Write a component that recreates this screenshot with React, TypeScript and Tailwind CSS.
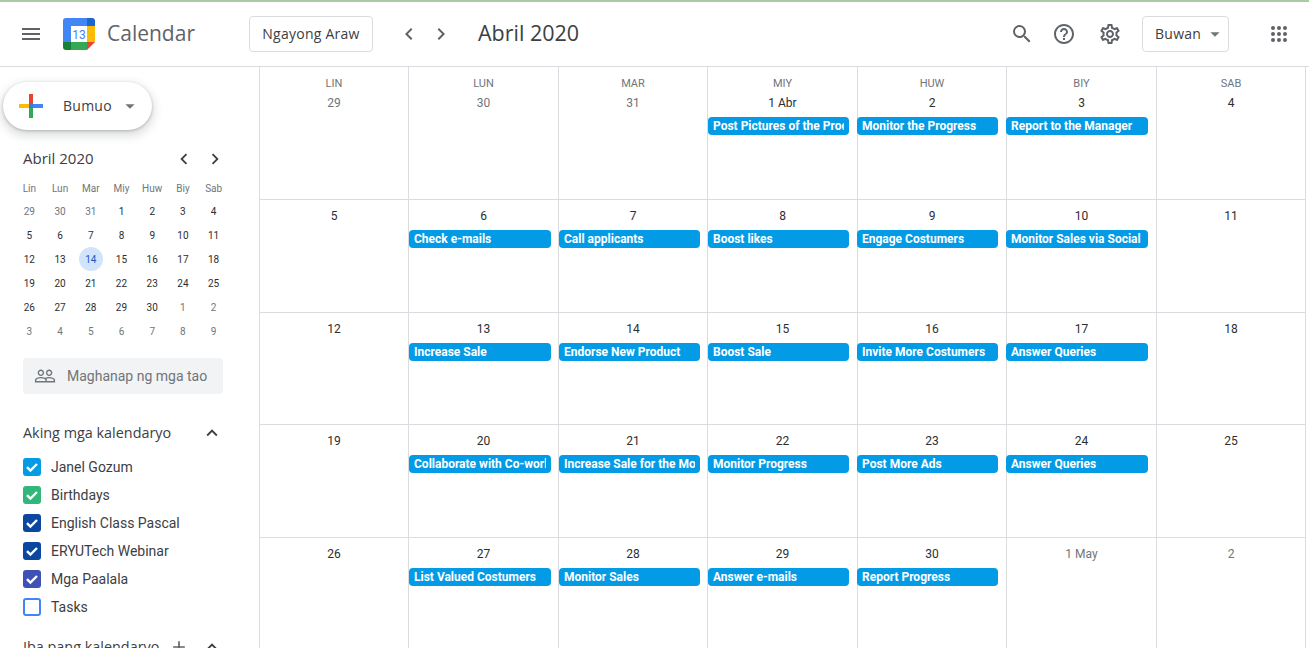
import React from "react";
import {
  MdMenu, MdSearch, MdHelpOutline, MdOutlineSettings, MdChevronLeft, MdChevronRight,
  MdExpandLess, MdPeopleOutline, MdAdd, MdArrowDropDown,
} from "react-icons/md";

const HEAD = '"Open Sans", Roboto, sans-serif';

function Logo() {
  return (
    <svg width="32" height="32" viewBox="0 0 32 32" className="shrink-0">
      <path d="M24 0H3a3 3 0 0 0-3 3v21h8V8h16z" fill="#4285f4" />
      <path d="M24 0h5a3 3 0 0 1 3 3v5h-8z" fill="#1967d2" />
      <rect x="24" y="8" width="8" height="16" fill="#fbbc04" />
      <rect x="8" y="24" width="16" height="8" fill="#34a853" />
      <path d="M0 24h8v8H3a3 3 0 0 1-3-3z" fill="#188038" />
      <path d="M24 24h8l-8 8z" fill="#ea4335" />
      <rect x="8" y="8" width="16" height="16" fill="#fff" />
      <text x="16" y="21" textAnchor="middle" fontSize="12" fontFamily="Roboto, sans-serif" fill="#4285f4">13</text>
    </svg>
  );
}

function Plus() {
  return (
    <svg width="24" height="24" viewBox="0 0 24 24" className="shrink-0">
      <rect x="10" y="0" width="4" height="10" fill="#ea4335" />
      <rect x="14" y="10" width="10" height="4" fill="#4285f4" />
      <rect x="10" y="14" width="4" height="10" fill="#34a853" />
      <rect x="0" y="10" width="10" height="4" fill="#fbbc04" />
      <rect x="10" y="10" width="4" height="4" fill="#3c78d8" />
    </svg>
  );
}

function AppsDots() {
  const pos = [2, 8, 14];
  return (
    <svg width="16" height="16" viewBox="0 0 16 16" className="text-[#5f6368]">
      {pos.map((y) => pos.map((x) => <circle key={`${x}-${y}`} cx={x} cy={y} r="2" fill="currentColor" />))}
    </svg>
  );
}

function Check() {
  return (
    <svg width="14" height="14" viewBox="0 0 14 14">
      <path d="M2 7.2 5.4 10.6 12 4" fill="none" stroke="#fff" strokeWidth="2.4" />
    </svg>
  );
}

const mini = [
  [29, 30, 31, 1, 2, 3, 4],
  [5, 6, 7, 8, 9, 10, 11],
  [12, 13, 14, 15, 16, 17, 18],
  [19, 20, 21, 22, 23, 24, 25],
  [26, 27, 28, 29, 30, 1, 2],
  [3, 4, 5, 6, 7, 8, 9],
];

const calendars = [
  { name: "Janel Gozum", color: "#039be5", on: true },
  { name: "Birthdays", color: "#33b679", on: true },
  { name: "English Class Pascal", color: "#0b47a1", on: true },
  { name: "ERYUTech Webinar", color: "#0b47a1", on: true },
  { name: "Mga Paalala", color: "#3f51b5", on: true },
  { name: "Tasks", color: "#4285f4", on: false },
];

type Cell = { d: string; e?: string; muted?: boolean };
const weeks: { h: string; cells: Cell[] }[] = [
  {
    h: "h-[133px]",
    cells: [
      { d: "29", muted: true }, { d: "30", muted: true }, { d: "31", muted: true },
      { d: "1 Abr", e: "Post Pictures of the Product" }, { d: "2", e: "Monitor the Progress" },
      { d: "3", e: "Report to the Manager" }, { d: "4" },
    ],
  },
  {
    h: "h-[113px]",
    cells: [
      { d: "5" }, { d: "6", e: "Check e-mails" }, { d: "7", e: "Call applicants" }, { d: "8", e: "Boost likes" },
      { d: "9", e: "Engage Costumers" }, { d: "10", e: "Monitor Sales via Social Media" }, { d: "11" },
    ],
  },
  {
    h: "h-[112px]",
    cells: [
      { d: "12" }, { d: "13", e: "Increase Sale" }, { d: "14", e: "Endorse New Product" }, { d: "15", e: "Boost Sale" },
      { d: "16", e: "Invite More Costumers" }, { d: "17", e: "Answer Queries" }, { d: "18" },
    ],
  },
  {
    h: "h-[113px]",
    cells: [
      { d: "19" }, { d: "20", e: "Collaborate with Co-workers" }, { d: "21", e: "Increase Sale for the Month" },
      { d: "22", e: "Monitor Progress" }, { d: "23", e: "Post More Ads" }, { d: "24", e: "Answer Queries" }, { d: "25" },
    ],
  },
  {
    h: "h-[111px]",
    cells: [
      { d: "26" }, { d: "27", e: "List Valued Costumers" }, { d: "28", e: "Monitor Sales" }, { d: "29", e: "Answer e-mails" },
      { d: "30", e: "Report Progress" }, { d: "1 May", muted: true }, { d: "2", muted: true },
    ],
  },
];
const heads = ["LIN", "LUN", "MAR", "MIY", "HUW", "BIY", "SAB"];
const barClass = ["", "w-[142px]", "w-[141px]", "w-[141px]", "w-[141px] -ml-px", "w-[142px] -ml-px", ""];

function DayCell({ cell, head, col }: { cell: Cell; head?: string; col: number }) {
  return (
    <div className="border-l border-[#dadce0] min-w-0 flex flex-col">
      {head && (
        <div className="h-[15px] mt-[9px] mb-[3px] text-center text-[11px] leading-[15px] text-[#70757a]">{head}</div>
      )}
      <div className={`${head ? "pt-px" : "mt-[8px]"} h-[17px] leading-[17px] text-center text-[12px] ${head ? "box-content" : ""} ${cell.muted ? "text-[#70757a]" : "text-[#2b2e31]"}`}>
        {cell.d}
      </div>
      {cell.e && (
        <div className={`mt-[5px] h-[18px] rounded-[4px] bg-[#039be5] pl-[5px] pr-[5px] ${barClass[col]}`}>
          <div className="overflow-hidden whitespace-nowrap h-[18px] leading-[19px] text-[12px] font-bold text-white">{cell.e}</div>
        </div>
      )}
    </div>
  );
}

export default function App() {
  return (
    <div className="w-[1309px] h-[648px] overflow-hidden bg-white flex flex-col text-[#3c4043]" style={{ fontFamily: "Roboto, sans-serif" }}>
      <div className="h-[2px] bg-[#a9cba4] shrink-0" />
      <header className="h-[65px] shrink-0 border-b border-[#dadce0] flex items-center">
        <MdMenu size={24} className="ml-[19px] text-[#5f6368] shrink-0" />
        <div className="ml-[20px]"><Logo /></div>
        <span className="ml-[12px] w-[142px] pb-[2px] text-[21px] text-[#5f6368] leading-[28px]" style={{ fontFamily: HEAD }}>Calendar</span>
        <button className="w-[124px] h-[36px] pb-[2px] border border-[#dadce0] rounded-[4px] text-[14px] font-medium text-[#3c4043] tracking-[0.25px]" style={{ fontFamily: HEAD }}>Ngayong Araw</button>
        <MdChevronLeft size={24} className="ml-[24px] text-[#5f6368]" />
        <MdChevronRight size={24} className="ml-[8px] text-[#5f6368]" />
        <span className="ml-[25px] pb-[2px] text-[21.5px] leading-[28px] text-[#3c4043]" style={{ fontFamily: HEAD }}>Abril 2020</span>
        <div className="ml-auto flex items-center">
          <MdSearch size={24} className="text-[#5f6368]" />
          <MdHelpOutline size={24} className="ml-[18px] text-[#5f6368]" />
          <MdOutlineSettings size={24} className="ml-[22px] text-[#5f6368]" />
          <div className="ml-[20px] w-[87px] h-[36px] border border-[#dadce0] rounded-[4px] flex items-center pl-[12px]">
            <span className="pb-[2px] text-[14px] font-medium tracking-[0.25px] text-[#3c4043]" style={{ fontFamily: HEAD }}>Buwan</span>
            <MdArrowDropDown size={22} className="ml-[3px] text-[#70757a]" />
          </div>
          <span className="ml-[42px] mr-[22px]"><AppsDots /></span>
        </div>
      </header>

      <div className="flex flex-1 min-h-0">
        <aside className="w-[259px] shrink-0 overflow-hidden">
          <button className="ml-[3px] mt-[15px] w-[149px] h-[48px] rounded-full bg-white flex items-center shadow-[0_1px_3px_rgba(60,64,67,0.3),0_4px_8px_3px_rgba(60,64,67,0.15)]">
            <span className="ml-[16px]"><Plus /></span>
            <span className="ml-[20px] pb-[2px] text-[14px] font-medium tracking-[0.25px] text-[#3c4043]" style={{ fontFamily: HEAD }}>Bumuo</span>
            <MdArrowDropDown size={22} className="ml-[7px] text-[#70757a]" />
          </button>

          <div className="mt-[19px] ml-[23px] w-[203px] flex items-center h-[20px]">
            <span className="pb-[2px] text-[15px] font-medium text-[#3c4043]" style={{ fontFamily: HEAD }}>Abril 2020</span>
            <MdChevronLeft size={22} className="ml-auto text-[#3c4043]" />
            <MdChevronRight size={22} className="ml-[9px] text-[#3c4043]" />
          </div>

          <div className="ml-[14px] mt-[10px] w-[215px] grid grid-cols-7 text-[10px] text-center">
            {["Lin", "Lun", "Mar", "Miy", "Huw", "Biy", "Sab"].map((h) => (
              <div key={h} className="h-[20px] leading-[20px] text-[#70757a]">{h}</div>
            ))}
            {mini.map((row, r) =>
              row.map((d, c) => {
                const muted = (r === 0 && c < 3) || (r === 4 && c > 4) || r === 5;
                const today = r === 2 && c === 2;
                return (
                  <div key={`${r}-${c}`} className="h-[24px] flex items-center justify-center">
                    <span className={`w-[24px] h-[24px] rounded-full flex items-center justify-center ${today ? "bg-[#d2e3fc] text-[#185abc]" : muted ? "text-[#70757a]" : "text-[#2b2e31]"}`}>{d}</span>
                  </div>
                );
              })
            )}
          </div>

          <div className="mt-[15px] ml-[23px] w-[200px] h-[36px] rounded-[4px] bg-[#f1f3f4] flex items-center">
            <MdPeopleOutline size={22} className="ml-[11px] text-[#70757a]" />
            <span className="ml-[11px] text-[14px] text-[#70757a]">Maghanap ng mga tao</span>
          </div>

          <div className="mt-[29px] ml-[23px] w-[200px] h-[20px] flex items-center justify-between">
            <span className="text-[14.4px] font-medium text-[#3c4043] whitespace-nowrap" style={{ fontFamily: HEAD }}>Aking mga kalendaryo</span>
            <MdExpandLess size={22} className="text-[#3c4043]" />
          </div>

          <div className="mt-[10px] ml-[23px] flex flex-col">
            {calendars.map((c) => (
              <div key={c.name} className="h-[28px] flex items-center">
                <span
                  className="w-[18px] h-[18px] rounded-[3px] border-2 flex items-center justify-center shrink-0"
                  style={{ borderColor: c.color, backgroundColor: c.on ? c.color : "transparent" }}
                >
                  {c.on && <Check />}
                </span>
                <span className="ml-[10px] text-[14px] text-[#3c4043]">{c.name}</span>
              </div>
            ))}
          </div>

          <div className="mt-[16px] ml-[23px] w-[200px] h-[20px] flex items-center">
            <span className="text-[14.4px] font-medium text-[#3c4043] whitespace-nowrap" style={{ fontFamily: HEAD }}>Iba pang kalendaryo</span>
            <MdAdd size={20} className="ml-auto text-[#5f6368]" />
            <MdExpandLess size={22} className="ml-[12px] text-[#3c4043]" />
          </div>
        </aside>

        <main className="w-[1047px] shrink-0 border-r border-[#dadce0] overflow-hidden">
          {weeks.map((w, i) => (
            <div key={i} className={`${w.h} grid grid-cols-[149px_150px_149px_150px_149px_150px_149px] ${i < 4 ? "border-b border-[#dadce0]" : ""}`}>
              {w.cells.map((cell, j) => (
                <DayCell key={j} col={j} cell={cell} head={i === 0 ? heads[j] : undefined} />
              ))}
            </div>
          ))}
        </main>
      </div>
    </div>
  );
}
